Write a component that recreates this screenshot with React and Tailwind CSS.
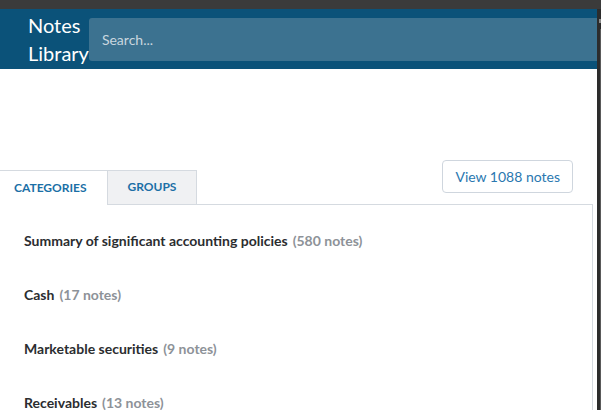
import React from 'react';

const categories = [
  { name: 'Summary of significant accounting policies', count: 580 },
  { name: 'Cash', count: 17 },
  { name: 'Marketable securities', count: 9 },
  { name: 'Receivables', count: 13 },
];

const App = () => {
  return (
    <div className="h-[410px] w-[601px] overflow-hidden bg-white font-['Lato','Liberation_Sans',sans-serif]">
      <div className="h-[9px] bg-[#3b3b3b]" />
      <div className="flex h-[401px]">
        <div className="flex-1 min-w-0">
          <header className="flex h-[60px] items-center bg-[#0b5279]">
            <div className="pl-[28px] text-[20px] leading-[28px] text-white">
              Notes
              <br />
              Library
            </div>
            <input
              type="text"
              placeholder="Search..."
              className="h-[43px] flex-1 min-w-0 rounded-l-[3px] bg-[#3c7290] px-[13px] text-[14px] text-white outline-none placeholder:text-[#c9d6df]"
            />
          </header>

          <div className="mt-[91px] mr-[4px]">
            <div className="flex items-start justify-between">
              <div className="mt-[10px] flex items-start">
                <div className="relative z-10 h-[35px] w-[107px] border-t border-[#d5dae0] bg-white pl-[14px] pt-[8px] text-[12px] font-bold uppercase text-[#1b6fa6]">
                  Categories
                </div>
                <div className="h-[34px] w-[90px] border-x border-t border-[#d5dae0] bg-[#f0f1f3] pt-[7px] text-center text-[12px] font-bold uppercase text-[#1b6fa6]">
                  Groups
                </div>
              </div>
              <button className="mr-[20px] h-[33px] rounded-[4px] border border-[#cfd6de] px-[12px] text-[14px] text-[#2a78b0]">
                View 1088 notes
              </button>
            </div>

            <div className="-mt-px h-[300px] border-t border-r border-[#d5dae0] pt-[8px]">
              {categories.map((c) => (
                <div key={c.name} className="flex h-[54px] items-center pl-[24px] text-[14px]">
                  <span className="font-bold text-[#2b2d30]">{c.name}</span>
                  <span className="ml-[5px] font-bold text-[#8d9298]">({c.count} notes)</span>
                </div>
              ))}
            </div>
          </div>
        </div>
        <div className="relative w-[4px] bg-[#2c2c2c]">
          <div className="absolute right-0 top-[10px] h-[4px] w-[2px] bg-[#8a8a8a]" />
          <div className="absolute right-0 top-[20px] h-[381px] w-[1px] bg-[#5a5a5a]" />
        </div>
      </div>
    </div>
  );
};

export default App;
